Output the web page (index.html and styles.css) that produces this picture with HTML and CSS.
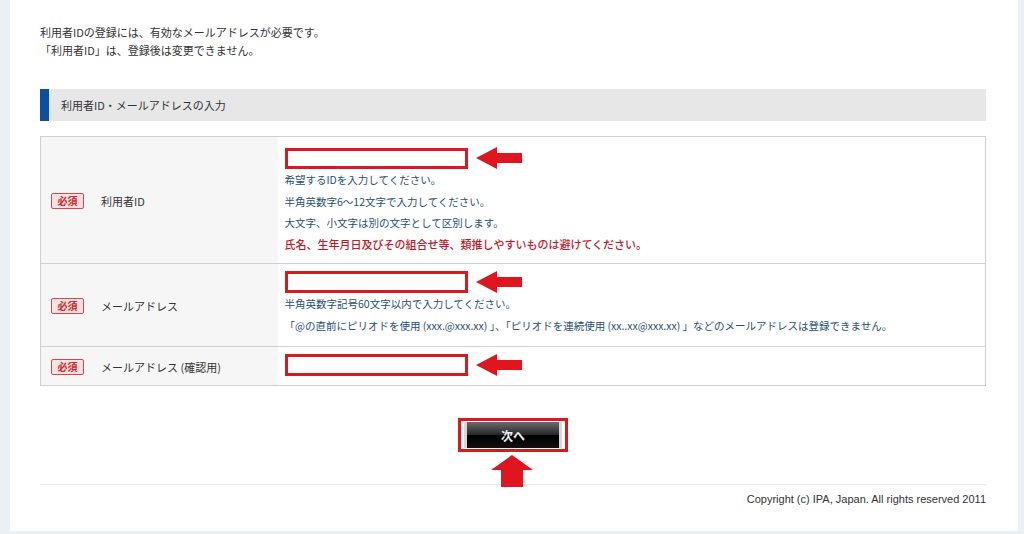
FILE: index.html
```html
<!DOCTYPE html>
<html lang="ja">
<head>
    <meta charset="UTF-8">
    <title>利用者ID・メールアドレスの入力</title>
    <link rel="stylesheet" href="styles.css">
</head>
<body>
    <div class="page">
        <div class="intro">
            <p>利用者IDの登録には、有効なメールアドレスが必要です。</p>
            <p>「利用者ID」は、登録後は変更できません。</p>
        </div>

        <h2 class="section-head">利用者ID・メールアドレスの入力</h2>

        <table class="form-table">
            <tr class="row-id">
                <th><span class="required">必須</span><span class="label">利用者ID</span></th>
                <td>
                    <div class="field">
                        <div class="input-box"></div>
                        <svg class="arrow-left" width="46" height="22" viewBox="0 0 46 22"><polygon points="0,11 21,0 21,6 46,6 46,16 21,16 21,22" fill="#e0161e"/></svg>
                    </div>
                    <p class="note">希望するIDを入力してください。</p>
                    <p class="note">半角英数字6～12文字で入力してください。</p>
                    <p class="note">大文字、小文字は別の文字として区別します。</p>
                    <p class="note warn">氏名、生年月日及びその組合せ等、類推しやすいものは避けてください。</p>
                </td>
            </tr>
            <tr class="row-mail">
                <th><span class="required">必須</span><span class="label">メールアドレス</span></th>
                <td>
                    <div class="field">
                        <div class="input-box tall"></div>
                        <svg class="arrow-left" width="46" height="22" viewBox="0 0 46 22"><polygon points="0,11 21,0 21,6 46,6 46,16 21,16 21,22" fill="#e0161e"/></svg>
                    </div>
                    <p class="note">半角英数字記号60文字以内で入力してください。</p>
                    <p class="note">「@の直前にピリオドを使用 (xxx.@xxx.xx) 」、「ピリオドを連続使用 (xx..xx@xxx.xx) 」などのメールアドレスは登録できません。</p>
                </td>
            </tr>
            <tr class="row-confirm">
                <th><span class="required">必須</span><span class="label">メールアドレス (確認用)</span></th>
                <td>
                    <div class="field">
                        <div class="input-box tall"></div>
                        <svg class="arrow-left" width="46" height="22" viewBox="0 0 46 22"><polygon points="0,11 21,0 21,6 46,6 46,16 21,16 21,22" fill="#e0161e"/></svg>
                    </div>
                </td>
            </tr>
        </table>

        <div class="actions">
            <div class="btn-frame">
                <button class="next-btn">次へ</button>
                <svg class="arrow-up" width="42" height="32" viewBox="0 0 42 32"><polygon points="21,0 42,15 32,15 32,32 10,32 10,15 0,15" fill="#e0161e"/></svg>
            </div>
        </div>

        <div class="footer">Copyright (c) IPA, Japan. All rights reserved 2011</div>
    </div>
</body>
</html>
```

FILE: styles.css
```css
* {
    box-sizing: border-box;
    margin: 0;
    padding: 0;
}

body {
    background-color: #e9f1f7;
    font-family: "Noto Sans CJK JP", "Liberation Sans", sans-serif;
    color: #333;
    font-size: 11px;
}

.page {
    background: #fff;
    margin: 0 6px 0 10px;
    height: 531px;
    padding: 23px 32px 0 30px;
}

.intro p {
    line-height: 18px;
    font-size: 11px;
}

.section-head {
    margin-top: 30px;
    height: 32px;
    background: #e7e7e7;
    border-left: 9px solid #0c4fa0;
    font-size: 11px;
    font-weight: normal;
    line-height: 32px;
    padding-left: 12px;
    color: #333;
}

.form-table {
    margin-top: 15px;
    width: 100%;
    border-collapse: collapse;
    border: 1px solid #cfcfcf;
}

.form-table tr {
    border-bottom: 1px solid #cfcfcf;
}

.form-table th {
    width: 237px;
    background: #f6f6f6;
    text-align: left;
    font-weight: normal;
    padding: 0 0 0 10px;
    vertical-align: middle;
}

.form-table td {
    padding: 7px 8px 9px 7px;
    vertical-align: top;
}

.row-id td {
    padding-top: 10px;
    padding-bottom: 8px;
}

.row-mail td {
    padding-bottom: 10px;
}

.required {
    display: inline-block;
    width: 33px;
    height: 16px;
    line-height: 14px;
    border: 1px solid #d9474a;
    border-radius: 2px;
    background: #fbe1e2;
    color: #d0262b;
    font-size: 10px;
    font-weight: bold;
    text-align: center;
    vertical-align: middle;
}

.label {
    margin-left: 17px;
    font-size: 11px;
    color: #333;
    vertical-align: middle;
}

.field {
    display: flex;
    align-items: center;
    gap: 8px;
}

.input-box {
    width: 183px;
    height: 21px;
    border: 3px solid #d71920;
    background: #fff;
}

.input-box.tall {
    height: 22px;
}

.note {
    line-height: 21.5px;
    font-size: 10.5px;
    color: #285078;
}

.note.warn {
    color: #c0182a;
    font-size: 11px;
    font-weight: 500;
}

.actions {
    margin-top: 32px;
    display: flex;
    justify-content: center;
}

.btn-frame {
    position: relative;
    width: 110px;
    height: 34px;
    border: 3px solid #d71920;
    padding: 1px 3px;
}

.next-btn {
    display: block;
    width: 100%;
    height: 26px;
    border: none;
    border-left: 3px solid #d8d8d8;
    border-right: 3px solid #d8d8d8;
    background: linear-gradient(#6a6a6a, #2a2a2a 48%, #000 52%, #111);
    color: #eee;
    font-family: "Noto Sans CJK JP", sans-serif;
    font-size: 12px;
    font-weight: bold;
}

.arrow-up {
    position: absolute;
    left: 30px;
    top: 34px;
}

.footer {
    margin-top: 32px;
    border-top: 1px solid #e8e8e8;
    padding-top: 6px;
    text-align: right;
    font-family: "Liberation Sans", sans-serif;
    font-size: 11px;
    line-height: 16px;
    color: #333;
}
```
